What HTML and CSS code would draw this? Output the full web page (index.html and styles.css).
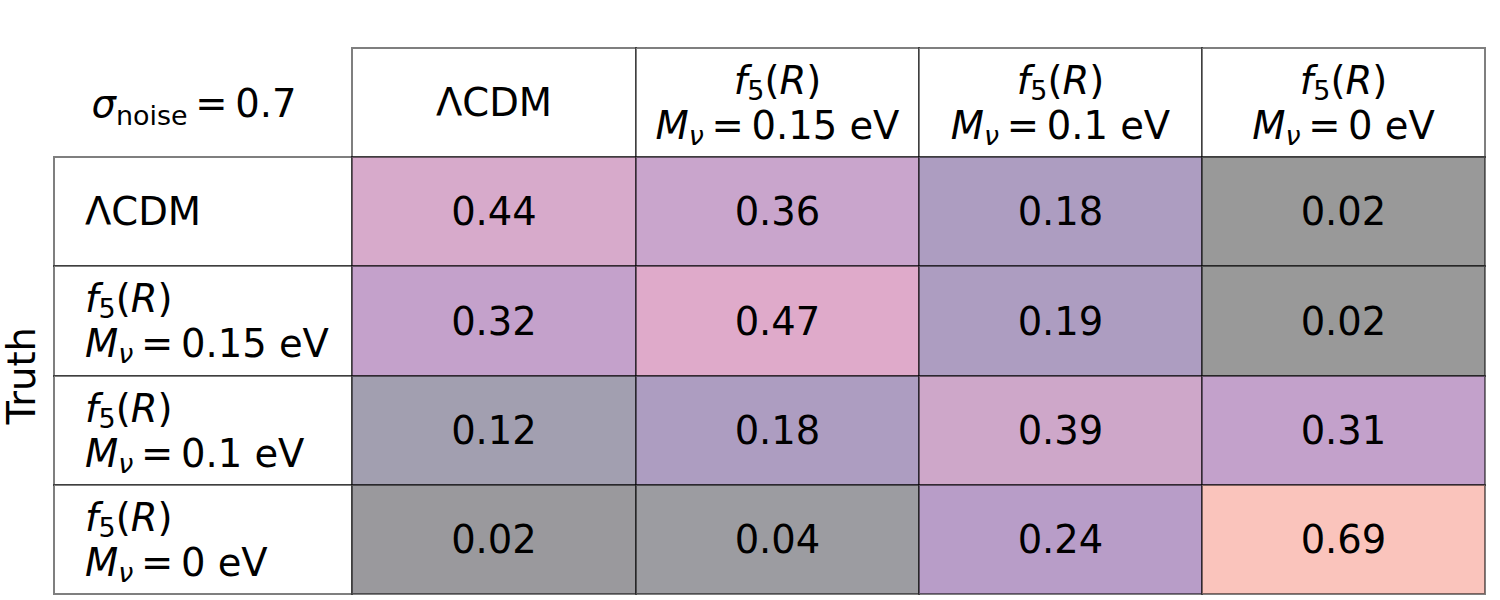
FILE: index.html
```html
<!DOCTYPE html>
<html>
<head>
<meta charset="utf-8">
<link rel="stylesheet" href="styles.css">
</head>
<body>
<div class="page">
  <div class="table">
    <div class="corner"></div>
    <div class="noise"><span><span class="m">σ</span><sub class="up">noise</sub><span class="eq">=</span>0.7</span></div>
    <div class="cell head"><span>ΛCDM</span></div>
    <div class="cell head"><div class="two"><div><span class="m">f</span><sub>5</sub>(<span class="m">R</span>)</div><div><span class="m">M</span><sub class="m">ν</sub><span class="eq">=</span>0.15 eV</div></div></div>
    <div class="cell head"><div class="two"><div><span class="m">f</span><sub>5</sub>(<span class="m">R</span>)</div><div><span class="m">M</span><sub class="m">ν</sub><span class="eq">=</span>0.1 eV</div></div></div>
    <div class="cell head"><div class="two"><div><span class="m">f</span><sub>5</sub>(<span class="m">R</span>)</div><div><span class="m">M</span><sub class="m">ν</sub><span class="eq">=</span>0 eV</div></div></div>

    <div class="truth"><span>Truth</span></div>

    <div class="cell rowhead"><span>ΛCDM</span></div>
    <div class="cell data c044">0.44</div>
    <div class="cell data c036">0.36</div>
    <div class="cell data c018">0.18</div>
    <div class="cell data c002a">0.02</div>

    <div class="cell rowhead"><div class="two"><div><span class="m">f</span><sub>5</sub>(<span class="m">R</span>)</div><div><span class="m">M</span><sub class="m">ν</sub><span class="eq">=</span>0.15 eV</div></div></div>
    <div class="cell data c032">0.32</div>
    <div class="cell data c047">0.47</div>
    <div class="cell data c019">0.19</div>
    <div class="cell data c002a">0.02</div>

    <div class="cell rowhead"><div class="two"><div><span class="m">f</span><sub>5</sub>(<span class="m">R</span>)</div><div><span class="m">M</span><sub class="m">ν</sub><span class="eq">=</span>0.1 eV</div></div></div>
    <div class="cell data c012">0.12</div>
    <div class="cell data c018">0.18</div>
    <div class="cell data c039">0.39</div>
    <div class="cell data c031">0.31</div>

    <div class="cell rowhead"><div class="two"><div><span class="m">f</span><sub>5</sub>(<span class="m">R</span>)</div><div><span class="m">M</span><sub class="m">ν</sub><span class="eq">=</span>0 eV</div></div></div>
    <div class="cell data c002b">0.02</div>
    <div class="cell data c004">0.04</div>
    <div class="cell data c024">0.24</div>
    <div class="cell data c069">0.69</div>
  </div>
</div>
</body>
</html>
```
FILE: styles.css
```css
html, body {
  margin: 0;
  padding: 0;
  background: #ffffff;
}
body {
  font-family: "DejaVu Sans", sans-serif;
  font-size: 38.5px;
  color: #000;
  width: 1500px;
  height: 600px;
  overflow: hidden;
}
.page {
  padding-top: 48px;
}
.table {
  display: grid;
  grid-template-columns: 54px 298px 284px 283px 283px 283px;
  grid-template-rows: 109px 109px 110px 109px 109px;
}
.corner {
  grid-column: 1;
  grid-row: 1;
}
.noise {
  grid-column: 2;
  grid-row: 1;
  display: flex;
  align-items: center;
  justify-content: center;
  padding: 2px 18px 0 0;
  white-space: nowrap;
}
.truth {
  grid-column: 1;
  grid-row: 2 / 6;
  display: flex;
  align-items: center;
  justify-content: center;
  padding-right: 12px;
}
.truth span {
  writing-mode: vertical-rl;
  transform: rotate(180deg);
}
.cell {
  outline: 2px solid rgba(0, 0, 0, 0.5);
  outline-offset: -1px;
  display: flex;
  align-items: center;
  background: #fff;
  white-space: nowrap;
}
.head {
  justify-content: center;
  text-align: center;
}
.rowhead {
  justify-content: flex-start;
  padding-left: 31px;
}
.data {
  justify-content: center;
}
.two {
  line-height: 45px;
}
.m {
  font-style: italic;
}
sub {
  font-size: 0.7em;
  vertical-align: -0.22em;
  line-height: 0;
}
sub.up {
  vertical-align: -0.3em;
}
.eq {
  margin: 0 0.2em;
}
.c044 { background: #d7aacb; }
.c036 { background: #c9a5cc; }
.c018 { background: #ad9dc1; }
.c002a { background: #999999; }
.c032 { background: #c4a1cb; }
.c047 { background: #dfaaca; }
.c019 { background: #ad9dc1; }
.c012 { background: #a29fb0; }
.c039 { background: #cea7c9; }
.c031 { background: #c3a1cb; }
.c002b { background: #9a999d; }
.c004 { background: #9c9ca1; }
.c024 { background: #b89dc8; }
.c069 { background: #fac4bc; }
```
